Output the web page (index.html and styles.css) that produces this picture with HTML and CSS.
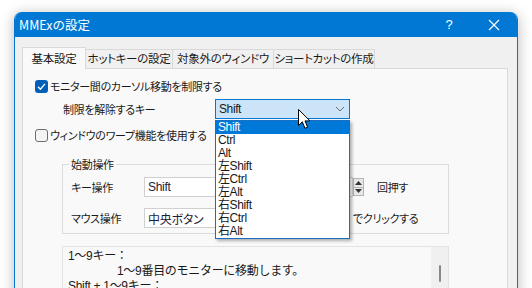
FILE: index.html
```html
<!DOCTYPE html>
<html lang="ja">
<head>
    <meta charset="UTF-8">
    <title>MMExの設定</title>
    <link rel="stylesheet" href="styles.css">
</head>
<body>

    <div class="window">
        <!-- タイトルバー -->
        <div class="titlebar">
            <span class="title">MMExの設定</span>
            <span class="help">?</span>
            <span class="close">
                <svg width="12" height="12" viewBox="0 0 12 12"><path d="M1 1 L11 11 M11 1 L1 11" stroke="#fff" stroke-width="1.2" fill="none"/></svg>
            </span>
        </div>

        <div class="client">
            <!-- タブ -->
            <div class="tabs">
                <div class="tab tab-active">基本設定</div>
                <div class="tab tab-2">ホットキーの設定</div>
                <div class="tab tab-3">対象外のウィンドウ</div>
                <div class="tab tab-4">ショートカットの作成</div>
            </div>

            <div class="panel">
                <div class="check-row">
                    <span class="checkbox checked">
                        <svg width="13" height="13" viewBox="0 0 13 13"><path d="M3 6.8 L5.4 9.2 L10 3.8" stroke="#fff" stroke-width="1.3" fill="none"/></svg>
                    </span>
                    <span>モニター間のカーソル移動を制限する</span>
                </div>

                <div class="key-row">
                    <span class="key-label">制限を解除するキー</span>
                    <div class="combo combo-open">
                        <span>Shift</span>
                        <svg class="chevron" width="10" height="6" viewBox="0 0 10 6"><path d="M1 1 L5 5 L9 1" stroke="#6b6b6b" stroke-width="1" fill="none"/></svg>
                    </div>
                </div>

                <div class="check-row check-row-2">
                    <span class="checkbox"></span>
                    <span>ウィンドウのワープ機能を使用する</span>
                </div>

                <!-- 始動操作 -->
                <fieldset class="group">
                    <legend>始動操作</legend>
                    <div class="group-row">
                        <span class="group-label">キー操作</span>
                        <div class="field field-main">Shift</div>
                        <div class="field field-num">2</div>
                        <div class="spin">
                            <span class="spin-btn"><svg width="7" height="4" viewBox="0 0 7 4"><path d="M0 4 L3.5 0 L7 4 Z" fill="#333"/></svg></span>
                            <span class="spin-btn"><svg width="7" height="4" viewBox="0 0 7 4"><path d="M0 0 L3.5 4 L7 0 Z" fill="#333"/></svg></span>
                        </div>
                        <span class="suffix">回押す</span>
                    </div>
                    <div class="group-row group-row-2">
                        <span class="group-label">マウス操作</span>
                        <div class="field field-main">中央ボタン</div>
                        <div class="field field-sub">ダブル</div>
                        <span class="suffix-2">でクリックする</span>
                    </div>
                </fieldset>

                <!-- 説明 -->
                <div class="memo">
                    <div class="memo-text">
                        <div>1〜9キー：</div>
                        <div class="indent">1〜9番目のモニターに移動します。</div>
                        <div>Shift + 1〜9キー：</div>
                    </div>
                    <div class="scrollbar"><span class="thumb"></span></div>
                </div>
            </div>
        </div>
    </div>

    <!-- 開いたドロップダウン -->
    <ul class="dropdown">
        <li class="selected">Shift</li>
        <li>Ctrl</li>
        <li>Alt</li>
        <li>左Shift</li>
        <li>左Ctrl</li>
        <li>左Alt</li>
        <li>右Shift</li>
        <li>右Ctrl</li>
        <li>右Alt</li>
    </ul>

    <svg class="cursor" width="13" height="21" viewBox="0 0 13 21"><path d="M0.5 0.5 L0.5 16.5 L4.3 12.8 L7 19.3 L9.6 18.2 L7 11.9 L12 11.9 Z" fill="#fff" stroke="#000" stroke-width="1"/></svg>

</body>
</html>
```

FILE: styles.css
```css
body {
    margin: 0;
    width: 532px;
    height: 288px;
    overflow: hidden;
    position: relative;
    background: #ffffff;
    font-family: 'Noto Sans CJK JP', sans-serif;
    font-size: 11px;
    letter-spacing: -0.3px;
    color: #1a1a1a;
    font-feature-settings: "palt";
    white-space: nowrap;
}

.window {
    margin: 12px 0 0 14px;
    width: 502px;
    height: 300px;
    border: 1px solid #0078d4;
    border-top: none;
    border-radius: 8px 8px 0 0;
    background: #f0f0f0;
    box-shadow: 0 2px 14px rgba(0, 0, 0, 0.28);
    overflow: hidden;
}

/* タイトルバー */
.titlebar {
    height: 25px;
    margin: 0 -1px;
    background: #0078d4;
    color: #ffffff;
    display: flex;
    align-items: center;
    padding-left: 5px;
}

.title {
    flex: 1;
    font-size: 12.5px;
    letter-spacing: 0;
    font-feature-settings: normal;
}

.help {
    width: 12px;
    margin-right: 33px;
    font-family: 'Liberation Sans', sans-serif;
    font-size: 13px;
    text-align: center;
}

.close {
    width: 12px;
    height: 12px;
    margin-right: 18px;
    display: flex;
}

/* タブ */
.client {
    padding: 10px 0 0 7px;
}

.tabs {
    display: flex;
    align-items: flex-end;
    height: 21px;
    position: relative;
    z-index: 1;
}

.tab {
    height: 19px;
    box-sizing: border-box;
    border: 1px solid #d9d9d9;
    border-bottom: none;
    background: #f0f0f0;
    display: flex;
    align-items: center;
    justify-content: center;
    line-height: 1;
    margin-left: -1px;
    font-size: 11.5px;
}

.tab-active {
    width: 64px;
    height: 22px;
    margin-bottom: -1px;
    margin-left: 0;
    background: #f9f9f9;
}

.tab-2 {
    width: 88px;
}

.tab-3 {
    width: 102px;
}

.tab-4 {
    width: 102px;
}

.panel {
    width: 486px;
    height: 240px;
    border: 1px solid #d9d9d9;
    background: #f9f9f9;
    padding: 9px 0 0 12px;
    box-sizing: border-box;
}

.check-row {
    display: flex;
    align-items: center;
    height: 16px;
    gap: 2px;
}

.check-row-2 {
    margin-top: 8px;
}

.checkbox {
    width: 13px;
    height: 13px;
    box-sizing: border-box;
    border: 1px solid #6e6e6e;
    border-radius: 3px;
    background: #f4f4f4;
    display: flex;
}

.checkbox.checked {
    border: none;
    background: #005fb8;
}

.key-row {
    display: flex;
    align-items: center;
    margin: 5px 0 0 28px;
    height: 20px;
}

.key-label {
    width: 152px;
}

.combo {
    width: 135px;
    height: 20px;
    box-sizing: border-box;
    display: flex;
    align-items: center;
    padding: 0 4px 0 3px;
    font-family: 'Liberation Sans', 'Noto Sans CJK JP', sans-serif;
    font-size: 12px;
    letter-spacing: -0.4px;
}

.combo span {
    flex: 1;
}

.combo-open {
    background: #cce4f7;
    border: 1px solid #0078d4;
}

/* 始動操作 */
.group {
    margin: 13px 0 0 27px;
    padding: 0 0 5px 8px;
    width: 387px;
    box-sizing: border-box;
    border: 1px solid #dcdcdc;
    min-width: 0;
}

.group legend {
    padding: 0 2px;
    margin-left: -2px;
    line-height: 16px;
}

.group-row {
    display: flex;
    align-items: center;
    height: 20px;
    margin-top: 5px;
}

.group-row-2 {
    margin-top: 11px;
}

.group-label {
    width: 73px;
}

.field {
    height: 20px;
    box-sizing: border-box;
    border: 1px solid #d0d0d0;
    background: #ffffff;
    display: flex;
    align-items: center;
    padding-left: 3px;
}

.field-main {
    width: 107px;
    font-family: 'Liberation Sans', 'Noto Sans CJK JP', sans-serif;
    font-size: 12px;
    color: #1c1c3c;
}

.field-num {
    width: 96px;
    margin-left: 6px;
}

.field-sub {
    width: 92px;
    margin-left: 6px;
}

.spin {
    width: 11px;
    height: 18px;
    display: flex;
    flex-direction: column;
}

.spin-btn {
    flex: 1;
    border: 1px solid #b4b4b4;
    background: #e8e8e8;
    display: flex;
    align-items: center;
    justify-content: center;
}

.spin-btn + .spin-btn {
    border-top: none;
}

.suffix {
    margin-left: 13px;
}

.suffix-2 {
    margin-left: 4px;
}

/* 説明テキスト */
.memo {
    margin: 12px 0 0 27px;
    width: 387px;
    height: 60px;
    box-sizing: border-box;
    border: 1px solid #e3e3e3;
    display: flex;
}

.memo-text {
    flex: 1;
    padding: 2px 0 0 5px;
    line-height: 15px;
    font-family: 'Liberation Sans', 'Noto Sans CJK JP', sans-serif;
    font-size: 12px;
    font-feature-settings: normal;
    letter-spacing: -0.3px;
}

.indent {
    padding-left: 49px;
}

.scrollbar {
    width: 17px;
    background: #f0f0f0;
    display: flex;
    justify-content: center;
    padding-top: 18px;
}

.thumb {
    width: 2px;
    height: 17px;
    background: #8a8a8a;
    border-radius: 1px;
}

/* ドロップダウン */
.dropdown {
    position: absolute;
    left: 215px;
    top: 120px;
    width: 135px;
    margin: 0;
    padding: 0;
    list-style: none;
    box-sizing: border-box;
    border: 1px solid #1a6fc2;
    background: #ffffff;
    box-shadow: 2px 2px 3px rgba(0, 0, 0, 0.3);
    font-family: 'Liberation Sans', 'Noto Sans CJK JP', sans-serif;
    font-size: 12px;
    font-feature-settings: normal;
    letter-spacing: -0.4px;
}

.dropdown li {
    height: 13px;
    line-height: 13px;
    padding-left: 2px;
}

.dropdown .selected {
    background: #0078d7;
    color: #ffffff;
}

.cursor {
    position: absolute;
    left: 298px;
    top: 109px;
}
```
